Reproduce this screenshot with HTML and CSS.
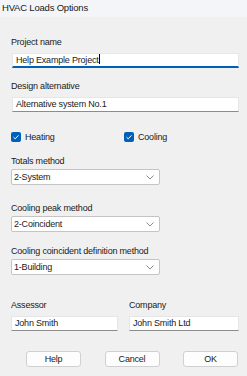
FILE: index.html
```html
<!DOCTYPE html>
<html>
<head>
    <title>HVAC Loads Options</title>
    <link rel="stylesheet" href="styles.css">
</head>
<body>
    <div class="window">
        <div class="titlebar">HVAC Loads Options</div>
        <div class="content">
            <div class="label first">Project name</div>
            <div class="textbox focused">Help Example Project<span class="caret"></span></div>

            <div class="label">Design alternative</div>
            <div class="textbox">Alternative system No.1</div>

            <div class="checks">
                <div class="check">
                    <span class="box"><svg width="8" height="8" viewBox="0 0 8 8"><path d="M1.5 4.2 L3.2 5.8 L6.5 2.3" fill="none" stroke="#fff" stroke-width="1"/></svg></span>
                    Heating
                </div>
                <div class="check">
                    <span class="box"><svg width="8" height="8" viewBox="0 0 8 8"><path d="M1.5 4.2 L3.2 5.8 L6.5 2.3" fill="none" stroke="#fff" stroke-width="1"/></svg></span>
                    Cooling
                </div>
            </div>

            <div class="label sel-label">Totals method</div>
            <div class="combo">2-System<svg width="8" height="5" viewBox="0 0 8 5"><path d="M0.5 0.5 L4 4 L7.5 0.5" fill="none" stroke="#8a8a8a" stroke-width="1"/></svg></div>

            <div class="label sel-label gap-lg">Cooling peak method</div>
            <div class="combo">2-Coincident<svg width="8" height="5" viewBox="0 0 8 5"><path d="M0.5 0.5 L4 4 L7.5 0.5" fill="none" stroke="#8a8a8a" stroke-width="1"/></svg></div>

            <div class="label sel-label">Cooling coincident definition method</div>
            <div class="combo">1-Building<svg width="8" height="5" viewBox="0 0 8 5"><path d="M0.5 0.5 L4 4 L7.5 0.5" fill="none" stroke="#8a8a8a" stroke-width="1"/></svg></div>

            <div class="people">
                <div class="person">
                    <div class="label">Assessor</div>
                    <div class="textbox">John Smith</div>
                </div>
                <div class="person wide">
                    <div class="label">Company</div>
                    <div class="textbox">John Smith Ltd</div>
                </div>
            </div>

            <div class="buttons">
                <div class="button">Help</div>
                <div class="button">Cancel</div>
                <div class="button">OK</div>
            </div>
        </div>
    </div>
</body>
</html>
```

FILE: styles.css
```css
body {
    margin: 0;
    font-family: "Liberation Sans", Arial, sans-serif;
    font-size: 9px;
    letter-spacing: -0.2px;
    color: #1a1a1a;
    background-color: #f0f0f0;
}
.window {
    width: 247px;
    height: 376px;
    background-color: #f0f0f0;
}
.titlebar {
    height: 17px;
    line-height: 16px;
    padding-left: 2px;
    font-size: 9.5px;
    background-color: #f3f5f9;
}
.content {
    padding: 0 8px 0 11px;
}
.label {
    line-height: 11px;
    margin-top: 13px;
    margin-bottom: 5px;
}
.label.first {
    margin-top: 20px;
}
.label.sel-label {
    margin-top: 14px;
    margin-bottom: 2px;
}
.label.gap-lg {
    margin-top: 18px;
}
.textbox {
    height: 13px;
    line-height: 13px;
    padding-left: 3px;
    margin-left: 1px;
    background-color: #fff;
    border: 1px solid #e6e6e6;
    border-bottom-color: #8c8c8c;
    white-space: nowrap;
    overflow: hidden;
}
.textbox.focused {
    border-bottom: 2px solid #005fb8;
    height: 12px;
    line-height: 13px;
}
.caret {
    display: inline-block;
    width: 1px;
    height: 10px;
    background-color: #000;
    vertical-align: -1px;
}
.checks {
    display: flex;
    margin-top: 19px;
    height: 11px;
}
.check {
    display: flex;
    align-items: center;
    gap: 4px;
    width: 113px;
}
.box {
    width: 10px;
    height: 10px;
    border-radius: 2px;
    background-color: #005fb8;
    display: flex;
    align-items: center;
    justify-content: center;
}
.combo {
    width: 140px;
    height: 14px;
    line-height: 14px;
    padding: 0 5px 0 2px;
    background-color: #fff;
    border: 1px solid #c4c4c4;
    border-radius: 2px;
    display: flex;
    justify-content: space-between;
    align-items: center;
}
.people {
    display: flex;
    gap: 11px;
    margin-top: 12px;
}
.person {
    width: 107px;
}
.person.wide {
    width: 110px;
}
.person .textbox {
    margin-left: 0;
}
.buttons {
    display: flex;
    justify-content: space-between;
    margin: 20px 1px 0 15px;
}
.button {
    width: 53px;
    height: 14px;
    line-height: 14px;
    text-align: center;
    background-color: #fdfdfd;
    border: 1px solid #d0d0d0;
    border-radius: 3px;
}
```
